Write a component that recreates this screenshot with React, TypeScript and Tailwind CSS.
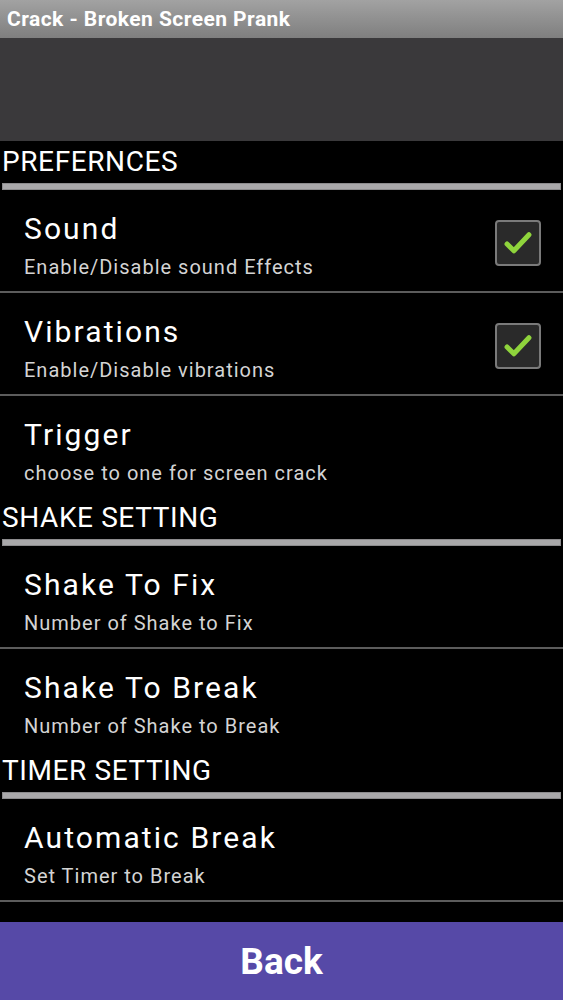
import React from "react";

const font = { fontFamily: "Roboto, 'Noto Sans', 'Liberation Sans', sans-serif" };

function Check() {
  return (
    <div className="w-[46px] h-[46px] rounded-[4px] border-2 border-[#7a7a7a] bg-[#2a2a2a] flex items-center justify-center shrink-0">
      <svg width="46" height="46" viewBox="0 0 46 46" className="block">
        <path d="M11 24 L18.5 31.5 L35 14" fill="none" stroke="#8fd43c" strokeWidth="5.5" strokeLinecap="round" strokeLinejoin="round" />
      </svg>
    </div>
  );
}

function Header({ label }: { label: string }) {
  return (
    <div>
      <div className="h-[42px] pt-[7px] pl-[2px] text-[28px] leading-[28px] tracking-[0.6px] text-white">{label}</div>
      <div className="mx-[2px] h-[7px] bg-[#a9a8aa] border border-[#8c8b8d]" />
    </div>
  );
}

function Item({ title, sub, checked }: { title: string; sub: string; checked?: boolean }) {
  return (
    <div className="h-[101px] flex items-start justify-between pl-[24px] pr-[22px]">
      <div className="pt-[24px]">
        <div className="text-[30px] leading-[30px] tracking-[2.1px] text-white">{title}</div>
        <div className="mt-[13px] text-[20px] leading-[20px] tracking-[1px] text-[#d4d4d4]">{sub}</div>
      </div>
      {checked && (
        <div className="mt-[30px]">
          <Check />
        </div>
      )}
    </div>
  );
}

function Divider() {
  return <div className="h-[2px] bg-[#5c5c5c]" />;
}

export default function App() {
  return (
    <div className="w-full h-[1000px] bg-black flex flex-col overflow-hidden" style={font}>
      <div className="h-[38px] bg-gradient-to-b from-[#a2a2a2] to-[#7f7f7f] pl-[7px] flex items-center">
        <span className="text-[21px] font-bold text-white leading-none tracking-[0.45px]">Crack - Broken Screen Prank</span>
      </div>
      <div className="h-[103px] bg-[#3a393b]" />
      <div className="flex-1 flex flex-col">
        <Header label="PREFERNCES" />
        <Item title="Sound" sub="Enable/Disable sound Effects" checked />
        <Divider />
        <Item title="Vibrations" sub="Enable/Disable vibrations" checked />
        <Divider />
        <Item title="Trigger" sub="choose to one for screen crack" />
        <Header label="SHAKE SETTING" />
        <Item title="Shake To Fix" sub="Number of Shake to Fix" />
        <Divider />
        <Item title="Shake To Break" sub="Number of Shake to Break" />
        <Header label="TIMER SETTING" />
        <Item title="Automatic Break" sub="Set Timer to Break" />
        <Divider />
      </div>
      <div className="h-[78px] bg-[#5649a7] flex items-center justify-center">
        <span className="text-[37px] font-bold text-white leading-none">Back</span>
      </div>
    </div>
  );
}
